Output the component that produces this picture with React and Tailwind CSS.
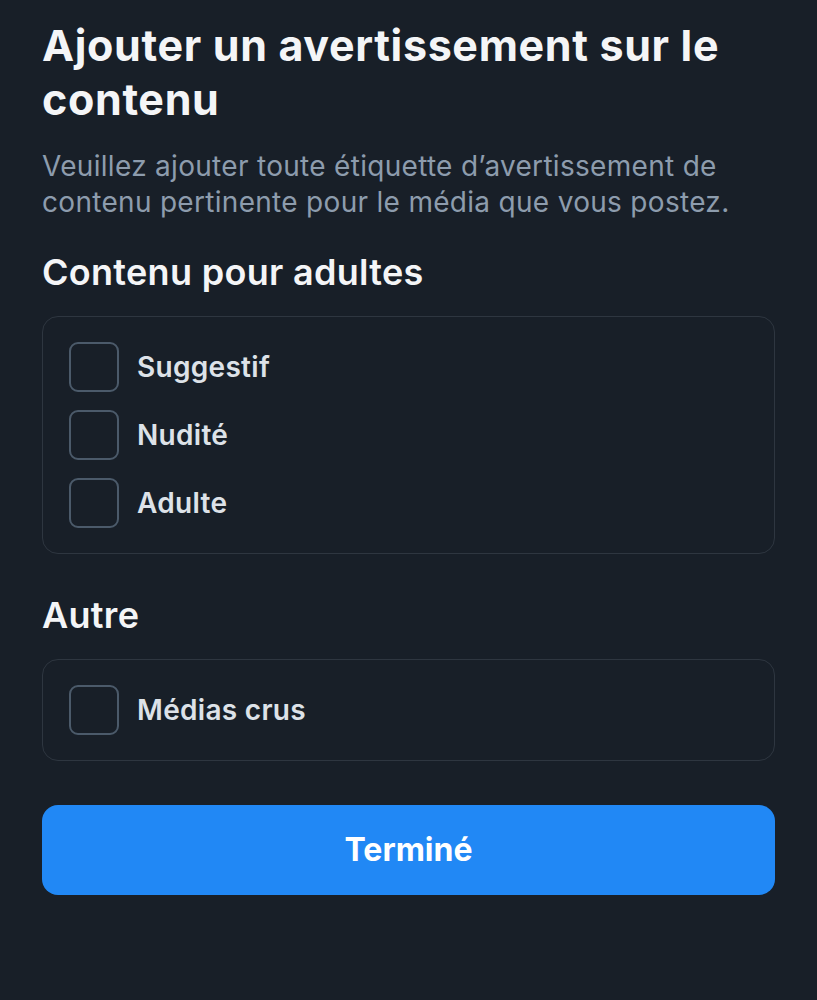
import React, { useState } from 'react';

const groups = [
    { title: 'Contenu pour adultes', items: ['Suggestif', 'Nudité', 'Adulte'] },
    { title: 'Autre', items: ['Médias crus'] },
];

const CheckRow = ({ label, checked, onToggle }) => (
    <label className="flex items-center gap-[18px] cursor-pointer" onClick={onToggle}>
        <span
            className={`h-[50px] w-[50px] shrink-0 rounded-[9px] border-2 ${checked ? 'bg-[#2188f5] border-[#2188f5]' : 'border-[#4b5a6a]'}`}
        />
        <span className="text-[28px] font-semibold leading-[34px] tracking-[0.3px] text-[#dde2e8]">{label}</span>
    </label>
);

export default function App() {
    const [checked, setChecked] = useState({});

    const toggle = (name) => setChecked((prev) => ({ ...prev, [name]: !prev[name] }));

    return (
        <div className="min-h-[1000px] w-full bg-[#181f28] px-[42px] pt-[18px] font-['Inter',sans-serif]">
            <h1 className="text-[43px] font-bold leading-[54px] tracking-[0.65px] text-[#f4f5f7]">
                Ajouter un avertissement sur le contenu
            </h1>
            <p className="mt-[22px] text-[28px] leading-[36px] tracking-[0.3px] text-[#8d9cad]">
                Veuillez ajouter toute étiquette d’avertissement de contenu pertinente pour le média que vous postez.
            </p>

            {groups.map((group, i) => (
                <section key={group.title} className={i === 0 ? 'mt-[30px]' : 'mt-[39px]'}>
                    <h2 className="text-[36px] font-semibold leading-[44px] tracking-[0.3px] text-[#f4f5f7]">{group.title}</h2>
                    <div className="mt-[22px] flex flex-col gap-[18px] rounded-[16px] border border-[#2e3640] px-[26px] py-[25px]">
                        {group.items.map((item) => (
                            <CheckRow key={item} label={item} checked={!!checked[item]} onToggle={() => toggle(item)} />
                        ))}
                    </div>
                </section>
            ))}

            <button className="mt-[44px] h-[90px] w-full rounded-[16px] bg-[#2188f5] text-[32px] font-bold text-white">
                Terminé
            </button>
        </div>
    );
}
